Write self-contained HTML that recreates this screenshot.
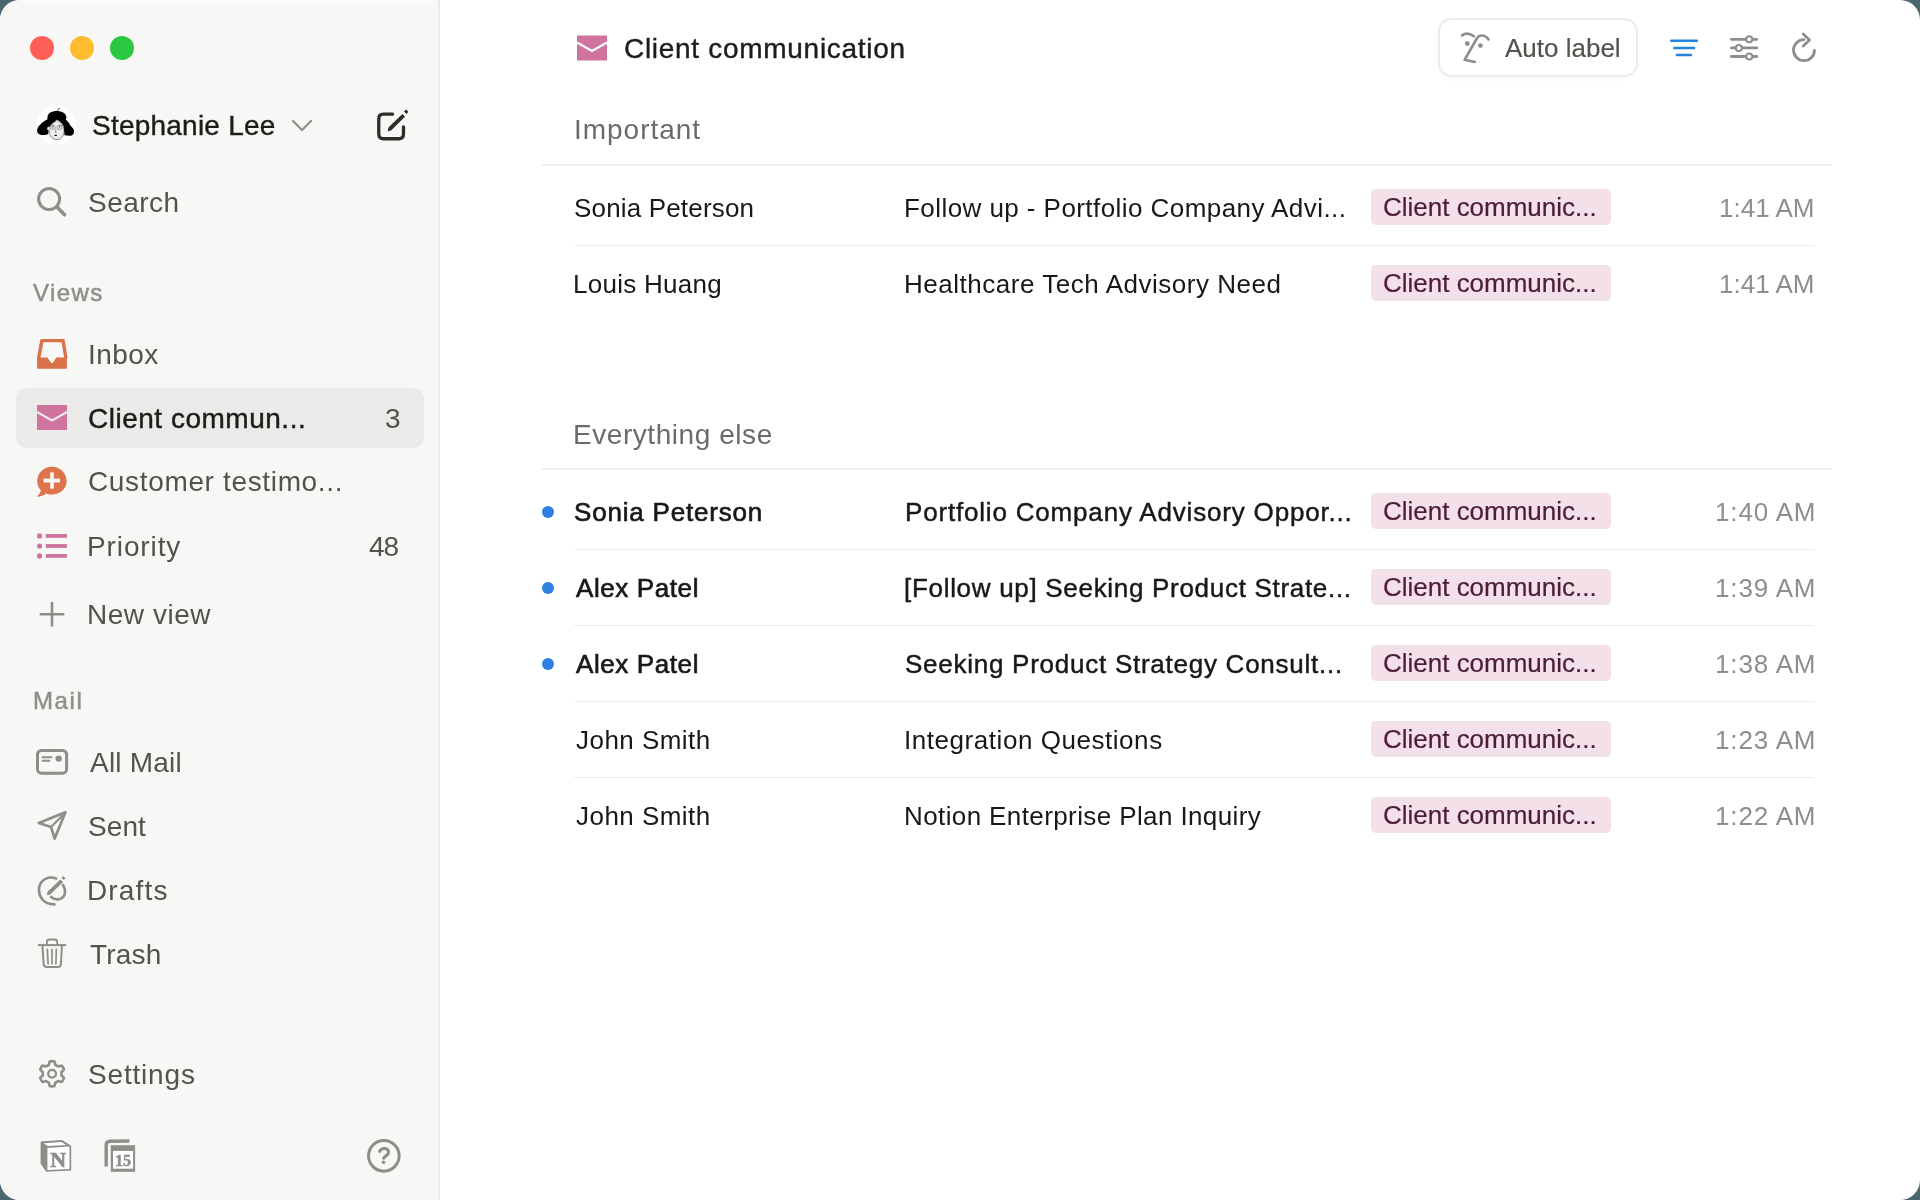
<!DOCTYPE html>
<html><head><meta charset="utf-8"><style>
*{margin:0;padding:0;box-sizing:border-box}
html,body{width:1920px;height:1200px;overflow:hidden;background:#4b6670}
#win{position:absolute;left:0;top:0;width:1920px;height:1200px;background:#fff;border-radius:20px;overflow:hidden;font-family:"Liberation Sans",sans-serif}
#sb{position:absolute;left:0;top:0;width:438px;height:1200px;background:#f7f7f5;box-shadow:inset 0 1px 0 rgba(255,255,255,0.7)}
#sbline{position:absolute;left:438px;top:0;width:2px;height:1200px;background:#ebebea}
.t{position:absolute;white-space:nowrap;line-height:1;will-change:transform}
svg{will-change:transform}
.tl{position:absolute;top:36px;width:24px;height:24px;border-radius:50%}
.sep{position:absolute;background:#efefee}
.tag{position:absolute;width:240px;height:36px;border-radius:5px;background:#f4e0e9}
.dot{position:absolute;left:542px;width:12px;height:12px;border-radius:50%;background:#2f80e0}
</style></head>
<body><div id="win">
<div id="sb"></div><div id="sbline"></div>
<div class="tl" style="left:30px;background:#fe5f57;border-color:#e2463f"></div>
<div class="tl" style="left:70px;background:#febc2e;border-color:#df9e20"></div>
<div class="tl" style="left:110px;background:#28c840;border-color:#1dad2b"></div>
<svg style="position:absolute;left:36px;top:105px" width="40" height="40" viewBox="0 0 40 40">
<circle cx="20" cy="20" r="20" fill="#fff"/>
<path d="M11.5 13 C11 9 15 6.3 19.5 6 C24 5.8 29.5 7 30.3 11.5 C30.5 13 30 14 29.6 14.6 C31.5 16 33.5 18.5 34.3 20.5 C36 22 38.3 24 38 26.5 C37.8 28.5 37 30.3 35.5 30.5 C33.5 31 31 30.5 28.5 30.2 L27.8 22 C27 19 25 17 22.5 15.5 L20.5 14.8 L19 16.5 C17 17.5 14.5 19.5 13 22 L12.2 29.3 C10 30 6.5 30.2 4.2 29.7 C2 29.2 0.8 27 1.2 25 C1.5 22.5 2.5 21 4 20 C6 17.5 8.5 15.5 11.2 14.5 Z" fill="#000"/>
<path d="M21.1 5.6 L23.6 3.1" stroke="#000" stroke-width="0.9"/>
<path d="M13.2 22.5 C14.5 19.8 17 17.8 19.2 16.8 L20.6 15.2 C23 16.5 25.5 18 26.6 20 C27.6 21.8 28.2 24.5 28 27.5 C27.5 31.5 24.8 34.6 21 34.6 C17.3 34.6 14.2 32 13.4 28.5 Z" fill="#ececec" stroke="#222" stroke-width="0.5"/>
<ellipse cx="12.4" cy="23.6" rx="1.2" ry="1.8" fill="#ececec"/>
<path d="M14.3 20.6 C15.8 19.9 17.6 20.2 18.3 20.8 M22.3 20.6 C23.6 20 25.2 20.3 26 20.9" stroke="#333" stroke-width="0.55" fill="none"/>
<ellipse cx="16.6" cy="22.6" rx="2.7" ry="1.7" fill="none" stroke="#444" stroke-width="0.45"/>
<ellipse cx="23.6" cy="22.6" rx="2.7" ry="1.7" fill="none" stroke="#444" stroke-width="0.45"/>
<circle cx="16.6" cy="22.3" r="0.5" fill="#222"/><circle cx="23.6" cy="22.3" r="0.5" fill="#222"/>
<ellipse cx="19.7" cy="30.4" rx="1.3" ry="0.6" fill="#000"/>
<path d="M20 24 L19.4 27.4 L20.6 27.8" stroke="#333" stroke-width="0.45" fill="none"/>
</svg>
<div class="t" style="left:91.68px;top:111.80px;font-size:28px;color:#1e1c19;letter-spacing:0.226px;-webkit-text-stroke:0.4px #1e1c19;">Stephanie Lee</div>
<svg style="position:absolute;left:288px;top:114px" width="28" height="22" viewBox="0 0 28 22"><path d="M5 7 L14 16 L23 7" fill="none" stroke="#8e8d89" stroke-width="2.2" stroke-linecap="round" stroke-linejoin="round"/></svg>
<svg style="position:absolute;left:360px;top:100px" width="60" height="50" viewBox="0 0 60 50">
<path d="M32.5 14.2 L23.5 14.2 Q18.75 14.2 18.75 19 L18.75 34 Q18.75 38.75 23.5 38.75 L38.7 38.75 Q43.5 38.75 43.5 34 L43.5 27" fill="none" stroke="#2f2d29" stroke-width="3.3" stroke-linecap="round"/>
<path d="M28.3 30.6 L29.3 27.5 L42.5 14.8 L44.3 16.6 L31.2 29.6 Z" fill="#2f2d29" stroke="#2f2d29" stroke-width="1.2" stroke-linejoin="round"/>
<path d="M44.5 11.5 L46.2 10 L48 11.8 L46.3 13.4 Z" fill="#2f2d29" stroke="#2f2d29" stroke-width="1"/>
</svg>
<svg style="position:absolute;left:30px;top:180px" width="45" height="45" viewBox="0 0 45 45">
<circle cx="19.1" cy="19.1" r="10.5" fill="none" stroke="#8e8d89" stroke-width="3"/>
<path d="M27 27 L34.5 34.8" stroke="#8e8d89" stroke-width="3.6" stroke-linecap="round"/></svg>
<div class="t" style="left:87.73px;top:188.80px;font-size:28px;color:#54524d;letter-spacing:0.495px;">Search</div>
<div class="t" style="left:33.14px;top:280.88px;font-size:24px;color:#8f8e8a;letter-spacing:1.388px;-webkit-text-stroke:0.5px #8f8e8a;">Views</div>
<svg style="position:absolute;left:30px;top:330px" width="45" height="45" viewBox="0 0 45 45">
<path d="M8.6 28.5 L11.9 10.6 L33 10.6 L36 28.5" fill="none" stroke="#d9714b" stroke-width="3.4" stroke-linejoin="round"/>
<path d="M7.1 27.6 L17.3 27.6 L21.3 33 L22.8 33 L26.2 27.6 L36.9 27.6 L36.9 38.8 L7.1 38.8 Z" fill="#d9714b"/>
</svg>
<div class="t" style="left:87.57px;top:340.65px;font-size:28px;color:#54524d;letter-spacing:0.447px;">Inbox</div>
<div style="position:absolute;left:16px;top:388px;width:408px;height:60px;border-radius:10px;background:#ebeae8"></div>
<svg style="position:absolute;left:30px;top:380px" width="45" height="60" viewBox="0 0 45 60">
<rect x="7" y="25" width="30" height="25" fill="#cf739f"/>
<path d="M7 32 L22 40.5 L37 32" fill="none" stroke="#ebeae8" stroke-width="2.2"/></svg>
<div class="t" style="left:87.80px;top:404.50px;font-size:28px;color:#1e1c19;letter-spacing:0.511px;-webkit-text-stroke:0.45px #1e1c19;">Client commun...</div>
<div class="t" style="left:384.93px;top:404.50px;font-size:28px;color:#54524d;">3</div>
<svg style="position:absolute;left:30px;top:460px" width="45" height="45" viewBox="0 0 45 45">
<path d="M21.9 6.7 C30 6.7 36.6 13 36.6 21 C36.6 29 30 34.5 21.9 34.5 C19.5 34.5 17.5 34 16 33.4 C13 35.5 10 36.5 7.3 36.8 C7 36.8 7 36.5 7.2 36.2 C9 34.5 10.3 32.8 11 30.5 C8.5 28 7.2 24.8 7.2 21 C7.2 13 13.8 6.7 21.9 6.7 Z" fill="#dd744b"/>
<rect x="20.2" y="12.4" width="3.6" height="16.3" fill="#f7f7f5"/>
<rect x="13.5" y="18.6" width="16.5" height="3.9" fill="#f7f7f5"/></svg>
<div class="t" style="left:87.58px;top:467.80px;font-size:28px;color:#54524d;letter-spacing:0.653px;">Customer testimo...</div>
<svg style="position:absolute;left:30px;top:525px" width="45" height="45" viewBox="0 0 45 45" fill="#cf73a0">
<circle cx="9.6" cy="10.9" r="2.6"/><circle cx="9.6" cy="21" r="2.6"/><circle cx="9.6" cy="30.9" r="2.6"/>
<rect x="15.75" y="9" width="21.2" height="3.8"/><rect x="15.75" y="19.1" width="21.2" height="3.8"/><rect x="15.75" y="29" width="21.2" height="3.8"/></svg>
<div class="t" style="left:86.70px;top:532.50px;font-size:28px;color:#54524d;letter-spacing:0.891px;">Priority</div>
<div class="t" style="left:369.41px;top:532.50px;font-size:28px;color:#54524d;letter-spacing:-1.085px;">48</div>
<svg style="position:absolute;left:30px;top:592px" width="45" height="45" viewBox="0 0 45 45">
<path d="M22 11 L22 33.5 M10.8 22.2 L33.3 22.2" stroke="#8e8d89" stroke-width="2.6" stroke-linecap="round"/></svg>
<div class="t" style="left:86.70px;top:600.80px;font-size:28px;color:#54524d;letter-spacing:0.532px;">New view</div>
<div class="t" style="left:32.68px;top:688.88px;font-size:24px;color:#8f8e8a;letter-spacing:1.623px;-webkit-text-stroke:0.5px #8f8e8a;">Mail</div>
<svg style="position:absolute;left:30px;top:740px" width="45" height="45" viewBox="0 0 45 45">
<rect x="7.5" y="10.5" width="29.1" height="22.7" rx="4" fill="none" stroke="#8e8d89" stroke-width="3"/>
<path d="M12.6 17.2 L21.4 17.2 M12.6 20.8 L19.3 20.8" stroke="#8e8d89" stroke-width="2" stroke-linecap="round"/>
<circle cx="28.7" cy="18.6" r="3.2" fill="#8e8d89"/></svg>
<div class="t" style="left:89.70px;top:749.30px;font-size:28px;color:#54524d;letter-spacing:0.213px;">All Mail</div>
<svg style="position:absolute;left:30px;top:805px" width="45" height="45" viewBox="0 0 45 45">
<path d="M35.4 7.2 L8.8 18 L21 22 L24.7 33.6 Z" fill="none" stroke="#8e8d89" stroke-width="2.7" stroke-linejoin="round"/>
<path d="M21 22 L33 10" stroke="#8e8d89" stroke-width="2.2"/></svg>
<div class="t" style="left:88.48px;top:813.00px;font-size:28px;color:#54524d;letter-spacing:0.092px;">Sent</div>
<svg style="position:absolute;left:30px;top:868px" width="45" height="45" viewBox="0 0 45 45">
<path d="M26.3 10.6 C21.5 8.5 15 9.5 11.5 14 C7.5 19 8.5 27 12.5 31.5 C15.5 35 20 36.3 24.4 36.4" fill="none" stroke="#8e8d89" stroke-width="2.6" stroke-linecap="round"/>
<path d="M33 17 C35.5 21 35.8 26 33.3 28.8 C30 32.5 24.5 32 21 29" fill="none" stroke="#8e8d89" stroke-width="2.6" stroke-linecap="round"/>
<path d="M17.3 26.6 L18.2 24 L30.5 12.3 L32.3 14.1 L20 25.8 Z" fill="#8e8d89" stroke="#8e8d89" stroke-width="1.2" stroke-linejoin="round"/>
<path d="M32 9.7 L33.3 8.6 L35 10.4 L33.8 11.6 Z" fill="#8e8d89" stroke="#8e8d89" stroke-width="1"/></svg>
<div class="t" style="left:87.45px;top:877.00px;font-size:28px;color:#54524d;letter-spacing:1.147px;">Drafts</div>
<svg style="position:absolute;left:30px;top:932px" width="45" height="45" viewBox="0 0 45 45">
<path d="M9 13.1 L35.2 13.1" stroke="#8e8d89" stroke-width="2" stroke-linecap="square"/>
<path d="M16.9 13 L16.9 10 Q16.9 7.5 19.4 7.5 L24.7 7.5 Q27.2 7.5 27.2 10 L27.2 13" fill="none" stroke="#8e8d89" stroke-width="1.8"/>
<path d="M12.4 13.1 L13.6 32 Q13.8 35 16.8 35 L27.8 35 Q30.7 35 30.9 32 L32 13.1" fill="none" stroke="#8e8d89" stroke-width="2"/>
<path d="M17.3 17.4 L18.1 31.8 M22 17.4 L22 31.8 M26.3 17.4 L25.9 31.8" stroke="#8e8d89" stroke-width="1.7" stroke-linecap="round"/></svg>
<div class="t" style="left:89.62px;top:941.30px;font-size:28px;color:#54524d;letter-spacing:0.194px;">Trash</div>
<svg style="position:absolute;left:30px;top:1052px" width="45" height="45" viewBox="0 0 45 45">
<path d="M22.10 9.15 L22.65 9.16 L23.20 9.20 L23.74 9.26 L24.29 9.34 L24.68 10.12 L24.95 11.12 L25.13 12.13 L25.31 12.92 L25.70 13.07 L26.07 13.23 L26.44 13.41 L26.80 13.61 L27.15 13.82 L27.49 14.05 L27.82 14.29 L28.14 14.55 L28.92 14.31 L29.88 13.97 L30.88 13.70 L31.75 13.65 L32.10 14.08 L32.42 14.52 L32.73 14.98 L33.01 15.45 L33.28 15.93 L33.52 16.43 L33.74 16.93 L33.94 17.44 L33.46 18.17 L32.73 18.90 L31.95 19.57 L31.36 20.12 L31.42 20.52 L31.46 20.93 L31.49 21.34 L31.50 21.75 L31.49 22.16 L31.46 22.57 L31.42 22.98 L31.36 23.38 L31.95 23.93 L32.73 24.60 L33.46 25.33 L33.94 26.06 L33.74 26.57 L33.52 27.07 L33.28 27.57 L33.01 28.05 L32.73 28.52 L32.42 28.98 L32.10 29.42 L31.75 29.85 L30.88 29.80 L29.88 29.53 L28.92 29.19 L28.14 28.95 L27.82 29.21 L27.49 29.45 L27.15 29.68 L26.80 29.89 L26.44 30.09 L26.07 30.27 L25.70 30.43 L25.31 30.58 L25.13 31.37 L24.95 32.38 L24.68 33.38 L24.29 34.16 L23.74 34.24 L23.20 34.30 L22.65 34.34 L22.10 34.35 L21.55 34.34 L21.00 34.30 L20.46 34.24 L19.91 34.16 L19.52 33.38 L19.25 32.38 L19.07 31.37 L18.89 30.58 L18.50 30.43 L18.13 30.27 L17.76 30.09 L17.40 29.89 L17.05 29.68 L16.71 29.45 L16.38 29.21 L16.06 28.95 L15.28 29.19 L14.32 29.53 L13.32 29.80 L12.45 29.85 L12.10 29.42 L11.78 28.98 L11.47 28.52 L11.19 28.05 L10.92 27.57 L10.68 27.07 L10.46 26.57 L10.26 26.06 L10.74 25.33 L11.47 24.60 L12.25 23.93 L12.84 23.38 L12.78 22.98 L12.74 22.57 L12.71 22.16 L12.70 21.75 L12.71 21.34 L12.74 20.93 L12.78 20.52 L12.84 20.12 L12.25 19.57 L11.47 18.90 L10.74 18.17 L10.26 17.44 L10.46 16.93 L10.68 16.43 L10.92 15.93 L11.19 15.45 L11.47 14.98 L11.78 14.52 L12.10 14.08 L12.45 13.65 L13.32 13.70 L14.32 13.97 L15.28 14.31 L16.06 14.55 L16.38 14.29 L16.71 14.05 L17.05 13.82 L17.40 13.61 L17.76 13.41 L18.13 13.23 L18.50 13.07 L18.89 12.92 L19.07 12.13 L19.25 11.12 L19.52 10.12 L19.91 9.34 L20.46 9.26 L21.00 9.20 L21.55 9.16 Z" fill="none" stroke="#8e8d89" stroke-width="2.6" stroke-linejoin="round"/>
<circle cx="22.1" cy="21.75" r="3.9" fill="none" stroke="#8e8d89" stroke-width="2.3"/></svg>
<div class="t" style="left:88.08px;top:1061.00px;font-size:28px;color:#54524d;letter-spacing:0.816px;">Settings</div>
<svg style="position:absolute;left:34px;top:1134px" width="110" height="44" viewBox="0 0 110 44">
<path d="M6.6 7.4 L28.1 6 L37.2 11.7 L37.2 36.4 L12.3 37.8 L6.6 29.8 Z" fill="#8e8d89"/>
<path d="M13.4 13.9 L35.5 12.6 L35.5 34.9 L13.4 35.9 Z" fill="#fff"/>
<path d="M9.8 9.3 L27.6 8.1 L32 10.9 L13.6 12 Z" fill="#fff"/>
<text x="24.3" y="32.6" font-family="Liberation Serif" font-weight="700" font-size="22" fill="#8e8d89" stroke="#8e8d89" stroke-width="0.7" text-anchor="middle">N</text>
<path d="M72.2 32.6 L72.2 11 Q72.2 7.3 76 7.2 L95.4 7" fill="none" stroke="#8e8d89" stroke-width="3.4"/>
<rect x="76.8" y="11.2" width="24.3" height="26.6" fill="#8e8d89"/>
<rect x="79" y="16.9" width="20.1" height="17.8" fill="#fff"/>
<text x="89" y="32.3" font-family="Liberation Serif" font-weight="700" font-size="16" fill="#8e8d89" stroke="#8e8d89" stroke-width="0.5" text-anchor="middle">15</text>
</svg>
<svg style="position:absolute;left:360px;top:1130px" width="50" height="50" viewBox="0 0 50 50">
<circle cx="23.85" cy="25.85" r="15.3" fill="none" stroke="#8e8d89" stroke-width="3"/>
<path d="M19.6 21.4 C20.5 19.4 22.2 18.4 24.2 18.4 C26.8 18.4 28.6 20 28.6 22.2 C28.6 24.8 25.2 25.6 23.7 28.2" fill="none" stroke="#8e8d89" stroke-width="3" stroke-linecap="round"/>
<circle cx="23.5" cy="32.3" r="1.8" fill="#8e8d89"/></svg>
<svg style="position:absolute;left:570px;top:30px" width="45" height="36" viewBox="0 0 45 36">
<rect x="7" y="5.5" width="30" height="25" fill="#cf739f"/>
<path d="M7 12.5 L22 21 L37 12.5" fill="none" stroke="#fff" stroke-width="2.2"/></svg>
<div class="t" style="left:623.78px;top:34.50px;font-size:28px;color:#1e1c19;letter-spacing:0.704px;-webkit-text-stroke:0.4px #1e1c19;">Client communication</div>
<div style="position:absolute;left:1438px;top:18px;width:200px;height:59px;border:2px solid #ececea;border-radius:14px;background:#fff;box-shadow:0 2px 4px rgba(0,0,0,0.035)"></div>
<svg style="position:absolute;left:1450px;top:25px" width="50" height="50" viewBox="0 0 50 50">
<path d="M12.1 10.4 Q17.5 6.5 23.8 11.3" fill="none" stroke="#8e8d89" stroke-width="2.6" stroke-linecap="round"/>
<path d="M38.6 14.5 Q35 9.5 30 10.8 Q28 11.2 26.8 13.5 L14.6 34.8 L24.8 37" fill="none" stroke="#8e8d89" stroke-width="2.6" stroke-linecap="round" stroke-linejoin="round"/>
<circle cx="17.3" cy="18.6" r="2.4" fill="#8e8d89"/><circle cx="30.4" cy="20.6" r="2.4" fill="#8e8d89"/></svg>
<div class="t" style="left:1505.02px;top:34.79px;font-size:26px;color:#54524d;letter-spacing:-0.000px;-webkit-text-stroke:0.15px #54524d;">Auto label</div>
<svg style="position:absolute;left:1660px;top:20px" width="170" height="60" viewBox="1660 20 170 60">
<path d="M1671.2 40.8 L1696.9 40.8 M1674.3 48.1 L1694 48.1 M1676.9 55 L1691 55" stroke="#2383e2" stroke-width="2.5" stroke-linecap="round"/>
<path d="M1731.4 39.3 L1756.8 39.3 M1731.4 47.9 L1756.8 47.9 M1731.4 56.5 L1756.8 56.5" stroke="#8e8d89" stroke-width="2.8" stroke-linecap="round"/>
<circle cx="1749.3" cy="39.3" r="3" fill="#fff" stroke="#8e8d89" stroke-width="2"/>
<circle cx="1738.8" cy="47.9" r="3" fill="#fff" stroke="#8e8d89" stroke-width="2"/>
<circle cx="1749.3" cy="56.5" r="3" fill="#fff" stroke="#8e8d89" stroke-width="2"/>
<path d="M1804 39.6 A10.5 10.5 0 1 0 1814.5 50.4" fill="none" stroke="#8e8d89" stroke-width="2.8" stroke-linecap="round"/>
<path d="M1803.2 34 L1809.5 40 L1803.2 46" fill="none" stroke="#8e8d89" stroke-width="2.8" stroke-linecap="round" stroke-linejoin="round"/>
</svg>
<div class="t" style="left:573.67px;top:116.00px;font-size:28px;color:#6d6b66;letter-spacing:0.977px;">Important</div>
<div class="sep" style="left:542px;top:164px;width:1290px;height:2px"></div>
<div class="t" style="left:573.25px;top:420.50px;font-size:28px;color:#6d6b66;letter-spacing:0.558px;">Everything else</div>
<div class="sep" style="left:542px;top:468px;width:1290px;height:2px"></div>
<div class="t" style="left:574.37px;top:194.69px;font-size:26px;color:#1a1815;letter-spacing:0.168px;">Sonia Peterson</div>
<div class="t" style="left:903.87px;top:194.69px;font-size:26px;color:#1a1815;letter-spacing:0.435px;">Follow up - Portfolio Company Advi...</div>
<div class="tag" style="left:1371px;top:188.5px"></div>
<div class="t" style="left:1382.53px;top:193.89px;font-size:26px;color:#4d1d35;letter-spacing:-0.009px;-webkit-text-stroke:0.2px #4d1d35;">Client communic...</div>
<div class="t" style="left:1719.02px;top:194.69px;font-size:26px;color:#8f8e8a;letter-spacing:0.014px;">1:41 AM</div>
<div class="t" style="left:573.42px;top:271.09px;font-size:26px;color:#1a1815;letter-spacing:0.261px;">Louis Huang</div>
<div class="t" style="left:903.87px;top:271.09px;font-size:26px;color:#1a1815;letter-spacing:0.527px;">Healthcare Tech Advisory Need</div>
<div class="tag" style="left:1371px;top:264.9px"></div>
<div class="t" style="left:1382.53px;top:270.29px;font-size:26px;color:#4d1d35;letter-spacing:-0.009px;-webkit-text-stroke:0.2px #4d1d35;">Client communic...</div>
<div class="t" style="left:1719.02px;top:271.09px;font-size:26px;color:#8f8e8a;letter-spacing:0.014px;">1:41 AM</div>
<div class="t" style="left:574.19px;top:499.19px;font-size:26px;color:#1a1815;letter-spacing:0.810px;-webkit-text-stroke:0.65px #1a1815;">Sonia Peterson</div>
<div class="t" style="left:904.59px;top:499.19px;font-size:26px;color:#1a1815;letter-spacing:0.815px;-webkit-text-stroke:0.45px #1a1815;">Portfolio Company Advisory Oppor...</div>
<div class="tag" style="left:1371px;top:493.0px"></div>
<div class="t" style="left:1382.53px;top:498.39px;font-size:26px;color:#4d1d35;letter-spacing:-0.009px;-webkit-text-stroke:0.2px #4d1d35;">Client communic...</div>
<div class="t" style="left:1715.02px;top:499.19px;font-size:26px;color:#8f8e8a;letter-spacing:0.848px;">1:40 AM</div>
<div class="dot" style="top:505.5px"></div>
<div class="t" style="left:576.32px;top:575.19px;font-size:26px;color:#1a1815;letter-spacing:0.597px;-webkit-text-stroke:0.65px #1a1815;">Alex Patel</div>
<div class="t" style="left:903.87px;top:575.19px;font-size:26px;color:#1a1815;letter-spacing:0.697px;-webkit-text-stroke:0.45px #1a1815;">[Follow up] Seeking Product Strate...</div>
<div class="tag" style="left:1371px;top:569.0px"></div>
<div class="t" style="left:1382.53px;top:574.39px;font-size:26px;color:#4d1d35;letter-spacing:-0.009px;-webkit-text-stroke:0.2px #4d1d35;">Client communic...</div>
<div class="t" style="left:1715.02px;top:575.19px;font-size:26px;color:#8f8e8a;letter-spacing:0.848px;">1:39 AM</div>
<div class="dot" style="top:581.5px"></div>
<div class="t" style="left:576.32px;top:651.19px;font-size:26px;color:#1a1815;letter-spacing:0.597px;-webkit-text-stroke:0.65px #1a1815;">Alex Patel</div>
<div class="t" style="left:905.04px;top:651.19px;font-size:26px;color:#1a1815;letter-spacing:0.742px;-webkit-text-stroke:0.45px #1a1815;">Seeking Product Strategy Consult...</div>
<div class="tag" style="left:1371px;top:645.0px"></div>
<div class="t" style="left:1382.53px;top:650.39px;font-size:26px;color:#4d1d35;letter-spacing:-0.009px;-webkit-text-stroke:0.2px #4d1d35;">Client communic...</div>
<div class="t" style="left:1715.02px;top:651.19px;font-size:26px;color:#8f8e8a;letter-spacing:0.848px;">1:38 AM</div>
<div class="dot" style="top:657.5px"></div>
<div class="t" style="left:575.64px;top:726.99px;font-size:26px;color:#1a1815;letter-spacing:0.459px;">John Smith</div>
<div class="t" style="left:903.60px;top:726.99px;font-size:26px;color:#1a1815;letter-spacing:0.549px;">Integration Questions</div>
<div class="tag" style="left:1371px;top:720.8px"></div>
<div class="t" style="left:1382.53px;top:726.19px;font-size:26px;color:#4d1d35;letter-spacing:-0.009px;-webkit-text-stroke:0.2px #4d1d35;">Client communic...</div>
<div class="t" style="left:1715.02px;top:726.99px;font-size:26px;color:#8f8e8a;letter-spacing:0.848px;">1:23 AM</div>
<div class="t" style="left:575.64px;top:802.99px;font-size:26px;color:#1a1815;letter-spacing:0.459px;">John Smith</div>
<div class="t" style="left:903.87px;top:802.99px;font-size:26px;color:#1a1815;letter-spacing:0.392px;">Notion Enterprise Plan Inquiry</div>
<div class="tag" style="left:1371px;top:796.8px"></div>
<div class="t" style="left:1382.53px;top:802.19px;font-size:26px;color:#4d1d35;letter-spacing:-0.009px;-webkit-text-stroke:0.2px #4d1d35;">Client communic...</div>
<div class="t" style="left:1715.02px;top:802.99px;font-size:26px;color:#8f8e8a;letter-spacing:0.848px;">1:22 AM</div>
<div class="sep" style="left:574px;top:245px;width:1240px;height:1px;background:#ebebea"></div>
<div class="sep" style="left:574px;top:549px;width:1240px;height:1px;background:#ebebea"></div>
<div class="sep" style="left:574px;top:625px;width:1240px;height:1px;background:#ebebea"></div>
<div class="sep" style="left:574px;top:701px;width:1240px;height:1px;background:#ebebea"></div>
<div class="sep" style="left:574px;top:777px;width:1240px;height:1px;background:#ebebea"></div>
</div></body></html>
